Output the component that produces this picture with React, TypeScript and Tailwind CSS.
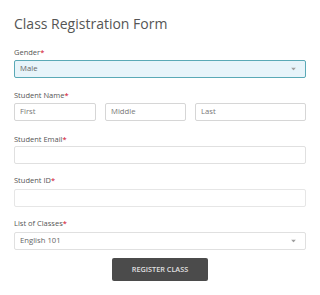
import React from "react";

const Req = () => <span className="text-[#d0021b]">*</span>;

const Label = ({ children, className = "" }: { children: React.ReactNode; className?: string }) => (
  <div className={`text-[7.5px] leading-[10px] text-[#555] font-medium ${className}`}>
    {children}
    <Req />
  </div>
);

const Arrow = () => (
  <svg width="5" height="3" viewBox="0 0 5 3" className="absolute right-[9px] top-1/2 -translate-y-1/2">
    <path d="M0 0 L5 0 L2.5 3 Z" fill="#a0a0a0" />
  </svg>
);

export default function App() {
  return (
    <div
      className="w-[320px] h-[295px] bg-white px-[14px] pt-[13px]"
      style={{ fontFamily: '"Open Sans", "Liberation Sans", sans-serif' }}
    >
      <div className="text-[14px] leading-[22px] text-[#555] font-normal">Class Registration Form</div>

      <Label className="mt-[12px] mb-[3px]">Gender</Label>
      <div className="relative h-[18px] border border-[#5aa9b6] bg-[#e7f4fa] rounded-[2px] flex items-center px-[5px] text-[7.7px] text-[#666]">
        Male
        <Arrow />
      </div>

      <Label className="mt-[12px] mb-[3px]">Student Name</Label>
      <div className="flex gap-[9px]">
        <div className="w-[82px] h-[18px] border border-[#d6d6d6] rounded-[2px] flex items-center px-[5px] text-[7.7px] text-[#777]">First</div>
        <div className="w-[81px] h-[18px] border border-[#d6d6d6] rounded-[2px] flex items-center px-[5px] text-[7.7px] text-[#777]">Middle</div>
        <div className="flex-1 h-[18px] border border-[#d6d6d6] rounded-[2px] flex items-center px-[5px] text-[7.7px] text-[#777]">Last</div>
      </div>

      <Label className="mt-[13px] mb-[2px]">Student Email</Label>
      <div className="h-[18px] border border-[#e0e0e0] rounded-[2px]" />

      <Label className="mt-[11px] mb-[4px]">Student ID</Label>
      <div className="h-[18px] border border-[#e6e6e6] rounded-[2px]" />

      <Label className="mt-[11px] mb-[4px]">List of Classes</Label>
      <div className="relative h-[18px] border border-[#e0e0e0] rounded-[2px] flex items-center px-[5px] text-[7.7px] text-[#666]">
        English 101
        <Arrow />
      </div>

      <div className="flex justify-center mt-[8px]">
        <div className="w-[96px] h-[23px] bg-[#4b4b4b] rounded-[2px] flex items-center justify-center text-[7.3px] font-semibold text-[#e0e0e0]">
          REGISTER CLASS
        </div>
      </div>
    </div>
  );
}
